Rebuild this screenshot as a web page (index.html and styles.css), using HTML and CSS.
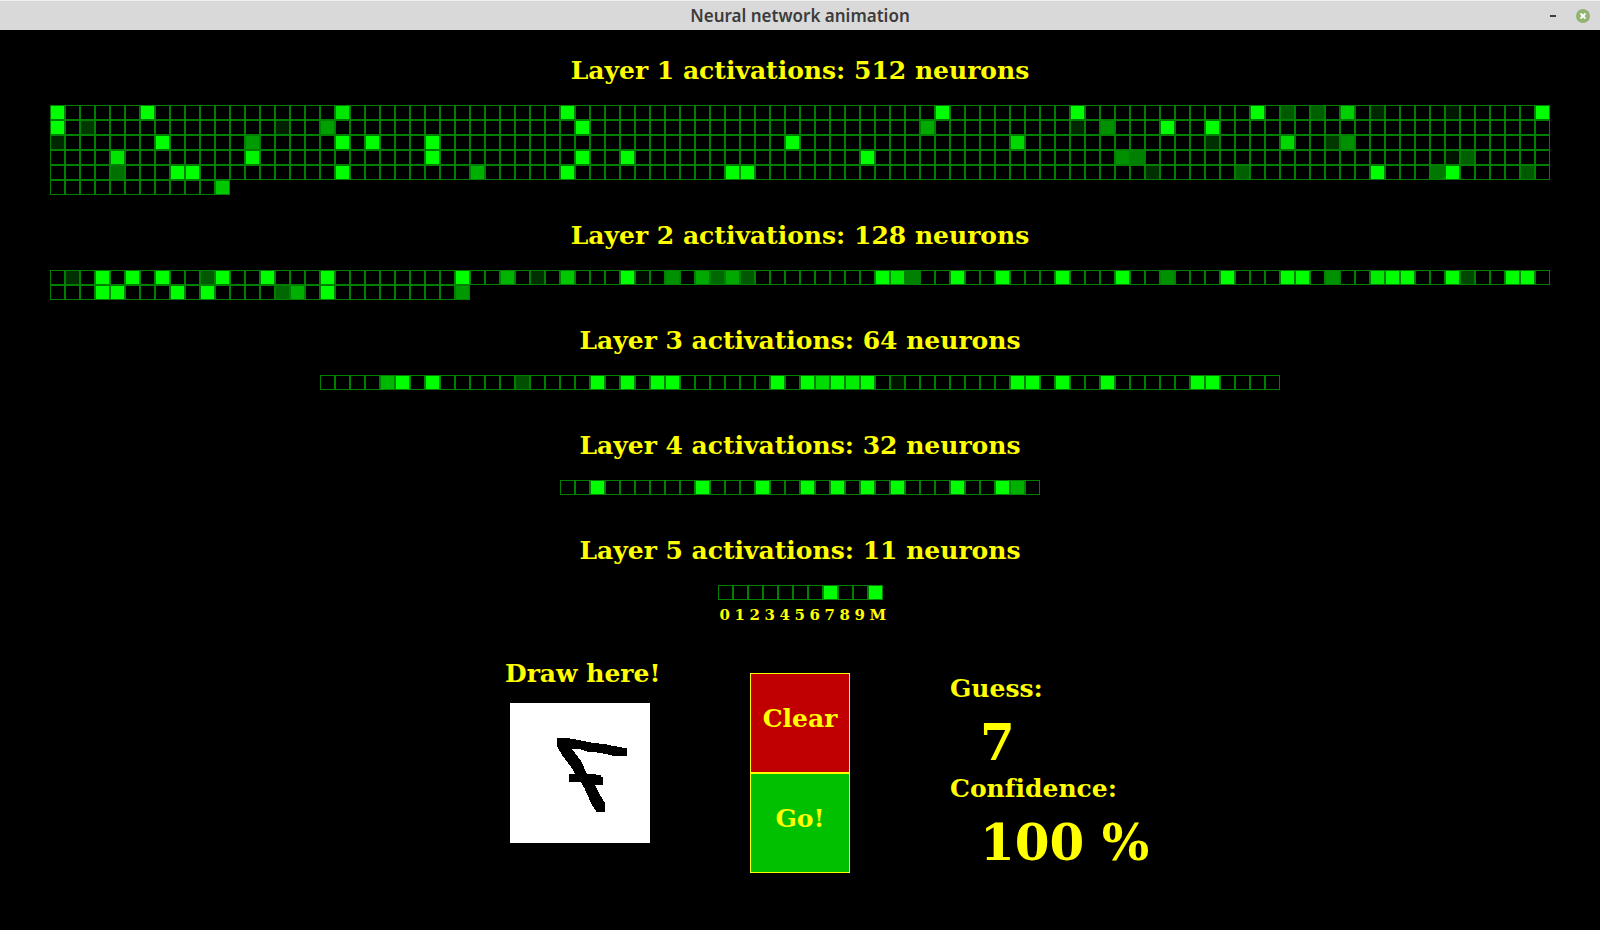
FILE: index.html
```html
<!DOCTYPE html>
<html lang="en">
<head>
<meta charset="utf-8">
<meta name="viewport" content="width=device-width, initial-scale=1">
<title>Neural network animation</title>
<link rel="stylesheet" href="styles.css">
</head>
<body>
<header class="titlebar">
  <h1 class="titlebar-text">Neural network animation</h1>
  <div class="window-buttons">
    <button class="window-button" type="button" aria-label="Minimize">
      <svg width="14" height="14" viewBox="0 0 14 14"><path d="M4 6h6v2H4z" fill="#3c3c3c"/></svg>
    </button>
    <button class="window-button" type="button" aria-label="Close">
      <svg width="14" height="14" viewBox="0 0 14 14"><circle cx="7" cy="7" r="7" fill="#92b372"/><path d="M4.500 4.500l5 5M9.500 4.500l-5 5" stroke="#fff" stroke-width="2"/></svg>
    </button>
  </div>
</header>
<main class="network">
  <section class="layer">
    <h2 class="heading">Layer 1 activations: 512 neurons</h2>
    <div class="neurons" data-layer="0"></div>
  </section>
  <section class="layer">
    <h2 class="heading">Layer 2 activations: 128 neurons</h2>
    <div class="neurons" data-layer="1"></div>
  </section>
  <section class="layer">
    <h2 class="heading">Layer 3 activations: 64 neurons</h2>
    <div class="neurons" data-layer="2"></div>
  </section>
  <section class="layer">
    <h2 class="heading">Layer 4 activations: 32 neurons</h2>
    <div class="neurons" data-layer="3"></div>
  </section>
  <section class="layer">
    <h2 class="heading">Layer 5 activations: 11 neurons</h2>
    <div class="neurons" data-layer="4"></div>
    <div class="classes">
      <span class="class">0</span><span class="class">1</span><span class="class">2</span><span class="class">3</span><span class="class">4</span><span class="class">5</span><span class="class">6</span><span class="class">7</span><span class="class">8</span><span class="class">9</span><span class="class">M</span>
    </div>
  </section>
  <section class="panel">
    <div class="draw">
      <h2 class="heading">Draw here!</h2>
      <svg class="pad" viewBox="0 0 420 420" role="img" aria-label="Drawn digit" shape-rendering="crispEdges">
        <path d="M141 106H177L195 109L240 118L288 124L300 127L351 136V160H315L270 149L237 147L210 139H186L195 150L213 174L231 213H249L273 217V223H279V247H255L267 270L285 301V328H261L246 307L222 253L213 238H177V214H195L186 196L159 160L141 130Z"/>
      </svg>
    </div>
    <div class="actions">
      <button class="action clear" type="button">Clear</button>
      <button class="action go" type="button">Go!</button>
    </div>
    <dl class="result">
      <dt class="heading">Guess:</dt>
      <dd class="value">7</dd>
      <dt class="heading">Confidence:</dt>
      <dd class="value">100 %</dd>
    </dl>
  </section>
</main>
<script src="network.js"></script>
</body>
</html>
```
FILE: styles.css
```css
* {
  box-sizing: border-box;
}

body {
  margin: 0;
  min-height: 100vh;
  background: #000;
  color: #ff0;
  font-family: "DejaVu Serif", serif;
  font-weight: bold;
  font-variant-ligatures: none;
}

.titlebar {
  display: grid;
  grid-template-columns: 1fr auto 1fr;
  align-items: center;
  height: 30px;
  padding: 0 10px;
  border-top: 1px solid #f0f0f0;
  background: #d9d9d9;
  color: #3c3c3c;
}

.titlebar-text {
  grid-column: 2;
  margin: 0;
  font: 600 17px/28px "Noto Sans", sans-serif;
}

.window-buttons {
  display: flex;
  justify-content: flex-end;
  gap: 16px;
}

.window-button {
  display: flex;
  padding: 0;
  border: 0;
  background: none;
}

.network {
  padding: 0 50px 40px;
}

.layer {
  display: flex;
  flex-direction: column;
  align-items: center;
  min-height: 105px;
  padding-top: 25px;
}

.heading {
  margin: 0;
  font-size: 25px;
  font-weight: bold;
  line-height: 32px;
  white-space: nowrap;
}

.neurons {
  display: flex;
  flex-wrap: wrap;
  max-width: 1500px;
  margin-top: 18px;
}

.neuron {
  width: 15px;
  height: 15px;
  border: 1px solid #008000;
}

.classes {
  display: flex;
  margin-top: 6px;
  font-size: 15px;
  line-height: 18px;
}

.class {
  width: 15px;
  padding-left: 2px;
}

.panel {
  display: grid;
  grid-template-columns: 1fr 100px 1fr;
  align-items: start;
  gap: 100px;
  margin-top: 34px;
}

.draw {
  justify-self: end;
  width: 145px;
}

.pad {
  display: block;
  width: 140px;
  height: 140px;
  margin: 13px 0 0 5px;
  background: #fff;
}

.actions {
  display: flex;
  flex-direction: column;
  margin-top: 15px;
}

.action {
  height: 100px;
  padding: 0 0 8px;
  border: 1px solid #ff0;
  color: #ff0;
  font: bold 25px/32px "DejaVu Serif", serif;
}

.clear {
  background: #c00000;
}

.go {
  background: #00c000;
}

.result {
  margin: 15px 0 0;
}

.value {
  margin: 0 0 0 30px;
  padding-top: 8px;
  font-size: 50px;
  line-height: 60px;
}
```
FILE: network.js
```js
// Each layer lists its size and the neurons that fire, as index: intensity (0-255).
const on = (...indices) => Object.fromEntries(indices.map((i) => [i, 255]));

const layers = [
  {
    size: 512,
    active: {
      ...on(0, 6, 34, 59, 68, 80, 99),
      19: 232, 82: 88, 84: 96, 86: 208, 88: 40, 93: 24,
      ...on(100, 135, 174, 177),
      102: 56, 115: 32, 118: 160, 148: 10, 158: 170, 168: 40, 170: 144,
      ...on(207, 219, 221, 225, 249),
      200: 40, 213: 155, 264: 216, 277: 48, 282: 216, 285: 56, 286: 144,
      ...on(325, 335, 338, 354),
      304: 230, 313: 245, 371: 144, 372: 128, 393: 20, 394: 96,
      ...on(408, 409, 419, 434, 445, 446, 488, 493),
      404: 112, 428: 176, 473: 48, 479: 96, 492: 120, 498: 88,
      511: 200
    }
  },
  {
    size: 128,
    active: {
      ...on(3, 5, 7, 11, 14, 18, 27, 38, 55, 60, 63, 67, 71, 78, 82, 83, 89, 90, 93, 97, 98),
      1: 48, 10: 88, 30: 180, 32: 48, 34: 200, 39: 12, 41: 144, 43: 168, 44: 104, 45: 168, 46: 88,
      56: 232, 57: 128, 74: 144, 85: 144, 88: 236, 94: 72,
      ...on(103, 104, 108, 110, 118),
      115: 104, 116: 176, 127: 152
    }
  },
  {
    size: 64,
    active: {
      ...on(5, 7, 18, 20, 22, 23, 30, 32, 34, 36, 46, 47, 49, 52, 58, 59),
      4: 184, 13: 80, 33: 220, 35: 236, 38: 20
    }
  },
  {
    size: 32,
    active: { ...on(2, 9, 13, 16, 18, 20, 22, 26, 29), 30: 176 }
  },
  {
    size: 11,
    active: on(7, 10)
  }
];

document.querySelectorAll(".neurons").forEach((row) => {
  const layer = layers[row.dataset.layer];
  for (let i = 0; i < layer.size; i++) {
    const neuron = document.createElement("span");
    neuron.className = "neuron";
    if (layer.active[i]) {
      neuron.style.backgroundColor = `rgb(0, ${layer.active[i]}, 0)`;
    }
    row.append(neuron);
  }
});
```
